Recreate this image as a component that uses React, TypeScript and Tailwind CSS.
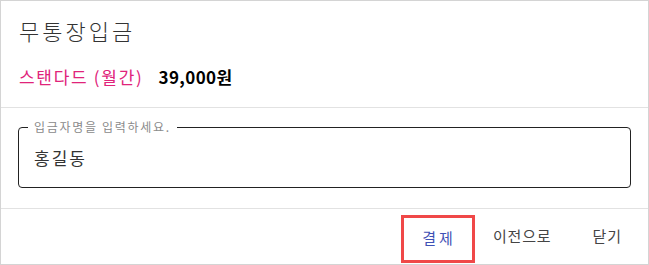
const FONT = "font-['Noto_Sans_CJK_KR','Noto_Sans',sans-serif]";

export default function App() {
	return (
		<div
			className={`${FONT} w-[649px] h-[265px] bg-white border border-[#d4d4d4] flex flex-col text-[#222]`}
		>
			<div className="px-[18px] pt-[15px] pb-[18px] border-b border-[#e2e2e2]">
				<h2 className="text-[22px] leading-[28px] font-light text-[#333] tracking-[3px]">
					무통장입금
				</h2>
				<div className="mt-[21px] flex items-center h-[24px]">
					<span className="text-[17px] text-[#e0237a] tracking-[1.7px]">
						스탠다드 (월간)
					</span>
					<span className="ml-[15px] text-[17px] font-bold text-black tracking-[0.4px]">
						39,000원
					</span>
				</div>
			</div>
			<div className="px-[17px] pt-[19px] pb-[20px] border-b border-[#e2e2e2]">
				<div className="relative h-[61px] border border-[#222] rounded-[4px] flex items-center px-[15px]">
					<span className="absolute left-[9px] -top-[9px] bg-white px-[6px] text-[12px] leading-[16px] text-[#8a8a8a] tracking-[1.7px]">
						입금자명을 입력하세요.
					</span>
					<span className="text-[17px] text-[#333] tracking-[2px]">홍길동</span>
				</div>
			</div>
			<div className="flex-1 flex items-center justify-end pr-[26px]">
				<div className="w-[74px] h-[48px] border-[3px] border-[#f04848] flex items-center justify-center mt-[4px] pl-[2px]">
					<span className="text-[15px] text-[#3f51b5] tracking-[3px]">결제</span>
				</div>
				<span className="ml-[18px] text-[15px] text-[#444] tracking-[0.8px]">이전으로</span>
				<span className="ml-[41px] text-[15px] text-[#444] tracking-[1px]">닫기</span>
			</div>
		</div>
	);
}
